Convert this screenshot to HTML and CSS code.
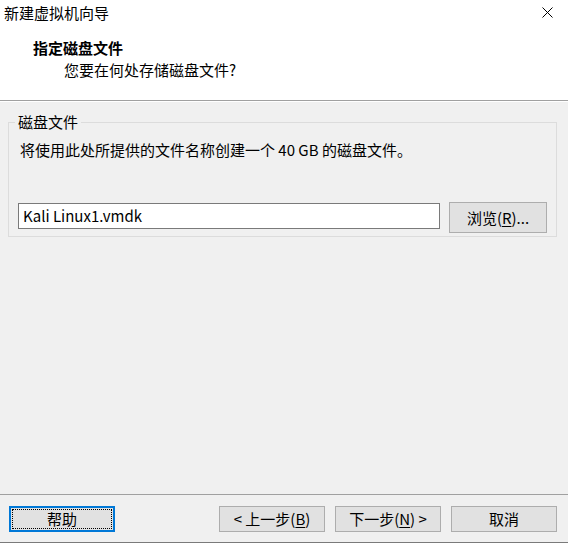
FILE: index.html
```html
<!DOCTYPE html>
<html lang="zh-CN">
<head>
<meta charset="utf-8">
<title>新建虚拟机向导</title>
<link rel="stylesheet" href="styles.css">
</head>
<body>
<div class="window">
  <div class="header">
    <div class="titlebar">
      <span class="title">新建虚拟机向导</span>
      <svg class="close" width="11" height="11" viewBox="0 0 11 11"><path d="M0.5 0.5 L10.5 10.5 M10.5 0.5 L0.5 10.5" stroke="#000" stroke-width="1" fill="none"/></svg>
    </div>
    <div class="page-title">指定磁盘文件</div>
    <div class="page-sub">您要在何处存储磁盘文件?</div>
  </div>
  <div class="content">
    <fieldset class="group">
      <legend class="legend">磁盘文件</legend>
      <div class="desc">将使用此处所提供的文件名称创建一个 40 GB 的磁盘文件。</div>
      <div class="file-row">
        <div class="input">Kali Linux1.vmdk</div>
        <div class="btn browse">浏览(<u>R</u>)...</div>
      </div>
    </fieldset>
  </div>
  <div class="footer">
    <div class="btn default">帮助</div>
    <div class="spacer"></div>
    <div class="btn">&lt; 上一步(<u>B</u>)</div>
    <div class="btn">下一步(<u>N</u>) &gt;</div>
    <div class="btn">取消</div>
  </div>
</div>
</body>
</html>
```

FILE: styles.css
```css
* { box-sizing: border-box; }
html, body {
  margin: 0;
  padding: 0;
  background: #f0f0f0;
}
body {
  font-family: "Noto Sans CJK SC", "Noto Sans", sans-serif;
  font-size: 15px;
  line-height: 18px;
  color: #000;
}
.window {
  width: 568px;
  height: 543px;
  display: flex;
  flex-direction: column;
  border-bottom: 1px solid #7a7a7a;
}
.header {
  background: #fff;
  height: 101px;
  border-bottom: 1px solid #a0a0a0;
  display: flex;
  flex-direction: column;
  flex: none;
}
.titlebar {
  display: flex;
  justify-content: space-between;
  align-items: flex-start;
  padding: 4px 15px 0 4px;
}
.close { margin-top: 3px; }
.page-title {
  font-weight: bold;
  margin-top: 17px;
  padding-left: 33px;
}
.page-sub {
  margin-top: 4px;
  padding-left: 64px;
}
.content {
  flex: 1;
  display: flex;
  flex-direction: column;
  border-top: 1px solid #fff;
}
.group {
  margin: 11px 11px 0 8px;
  border: 1px solid #dcdcdc;
  padding: 0 9px 3px 9px;
  min-width: 0;
}
.legend {
  padding: 0 3px;
  margin-left: -3px;
}
.desc {
  margin-top: 10px;
  padding-left: 2px;
}
.file-row {
  display: flex;
  align-items: flex-start;
  gap: 9px;
  margin-top: 43px;
}
.input {
  width: 422px;
  height: 26px;
  margin-top: 1px;
  background: #fff;
  border: 1px solid #7a7a7a;
  padding: 3px 4px;
}
.btn {
  width: 106px;
  height: 26px;
  background: #e1e1e1;
  border: 1px solid #adadad;
  display: flex;
  align-items: center;
  justify-content: center;
  white-space: nowrap;
}
.btn u { text-decoration: underline; text-underline-offset: 2px; }
.browse {
  width: 98px;
  height: 31px;
}
.footer {
  flex: none;
  display: flex;
  gap: 10px;
  border-top: 1px solid #a0a0a0;
  padding: 11px 11px 10px 9px;
}
.spacer { flex: 1; }
.default {
  border: 2px solid #0078d7;
  outline: 1px dotted #000;
  outline-offset: -4px;
}
```
